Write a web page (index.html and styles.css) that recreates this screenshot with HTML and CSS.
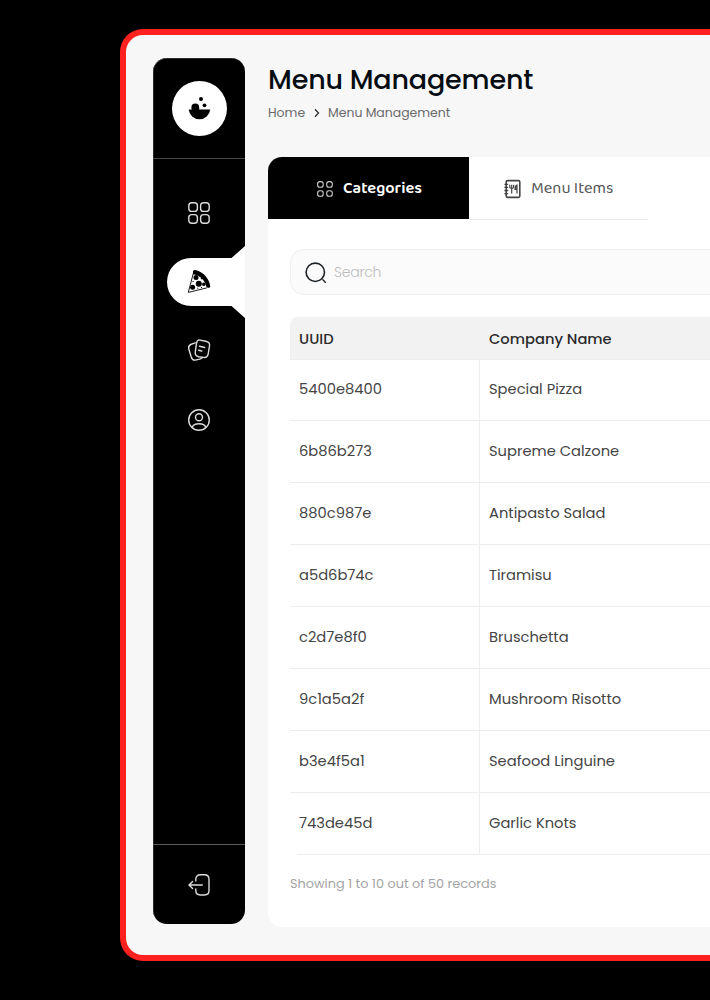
FILE: index.html
```html
<!DOCTYPE html>
<html lang="en">
<head>
<meta charset="utf-8">
<title>Menu Management</title>
<link rel="stylesheet" href="styles.css">
</head>
<body>
<div class="frame">
  <aside class="sidebar">
    <div class="brand">
      <svg class="logo" viewBox="0 0 55 55"><circle cx="27.5" cy="27.5" r="27.5" fill="#fff"/><path d="M16.700 28.500H19.800a4 4 0 0 1-.4-2 3.900 3.900 0 0 1 7.800 0v2h11a10.800 10.800 0 0 1-21.500 0z"/><circle cx="29" cy="18" r="2"/><circle cx="32.500" cy="24.300" r="1.900"/></svg>
    </div>
    <nav class="nav">
      <a class="nav-item"><svg class="ico" viewBox="0 0 24 24"><rect x="1.800" y="1.800" width="8.600" height="8.600" rx="3"/><rect x="13.600" y="1.800" width="8.600" height="8.600" rx="3"/><rect x="1.800" y="13.600" width="8.600" height="8.600" rx="3"/><rect x="13.600" y="13.600" width="8.600" height="8.600" rx="3"/></svg></a>
      <a class="nav-item active">
        <svg class="pill" viewBox="0 0 78 72"><path fill="#fff" d="M24 12H64.500L78 0V72L64.500 60H24a24 24 0 0 1 0-48z"/></svg>
        <svg class="pizza" viewBox="0 0 24 24"><path d="M6.300 4.300L1.300 23.400L19.800 18.900" fill="#fff" stroke="#000" stroke-width=".9"/><path d="M6 2.200C7 .9 8 1 9.200 1.300C16.500 3.300 22 9.500 23.200 16.700C23.500 18.200 22.500 19.200 21 18.700L19.500 18.200C18.300 11.500 13 6.200 6 5.200z"/><circle cx="9" cy="8.600" r="2.500"/><circle cx="11.800" cy="14.700" r="3"/><circle cx="5.600" cy="18.200" r="2.500"/><circle cx="16.800" cy="15.300" r="1.800"/><path d="M14 9l1.200 1.200M10.500 19.500l.8-.6M5.800 12l.5 1M14 18.800l1-.5" stroke="#000" stroke-width="1.100"/></svg>
      </a>
      <a class="nav-item"><svg class="ico cards" viewBox="0 0 24 24"><path d="M11.800 1.900l6.900 1.300c2.900.5 4.300 2.100 3.800 4.900l-1.300 7.800c-.5 2.800-2.100 4-4.900 3.500l-4.500-.7c-2.800-.5-4-2.100-3.500-4.900l1.200-8.400c.3-2.100 1-3.300 2.300-3.500z"/><path d="M8.200 4.800L4.800 6C2 6.900 1.100 8.500 1.900 11.200l2.200 7.500c.8 2.800 2.500 3.900 5.200 3.200l3.400-.8c1.300-.3 2.200-.8 2.700-1.500"/><path d="M12.600 8.300l5 1.200M11.600 12.200l3.200.8"/></svg></a>
      <a class="nav-item"><svg class="ico" viewBox="0 0 24 24"><circle cx="12" cy="12" r="10.300"/><circle cx="12" cy="9.300" r="3.500"/><path d="M5.200 19.500c.8-2.500 3.500-3.700 6.800-3.700s6 1.200 6.800 3.700"/></svg></a>
    </nav>
    <div class="logout"><svg class="ico" viewBox="0 0 24 24"><path d="M8.800 7.900V6.300C8.800 3.500 10.500 1.800 13.300 1.800H17.500C20.300 1.800 22 3.500 22 6.300V17.500C22 20.300 20.300 22 17.500 22H13.300C10.500 22 8.800 20.300 8.800 17.500V16"/><path d="M15.300 12H2.200M5.600 8.400L2 12l3.600 3.600"/></svg></div>
  </aside>

  <main class="main">
    <h1 class="title">Menu Management</h1>
    <div class="crumbs"><span class="crumb-home">Home</span><svg class="chev" viewBox="0 0 6 10"><path d="M1 1.200L4.500 5 1 8.800" fill="none" stroke="#333" stroke-width="1.300"/></svg><span>Menu Management</span></div>

    <section class="card">
      <div class="tabs">
        <div class="tab tab-on"><svg class="tab-ico" viewBox="0 0 18 18"><g fill="none" stroke="#ccc" stroke-width="1.100"><rect x="1.600" y="1.600" width="5.600" height="5.600" rx="2.300"/><rect x="10.700" y="1.600" width="5.600" height="5.600" rx="2.300"/><rect x="1.600" y="10.700" width="5.600" height="5.600" rx="2.300"/><rect x="10.700" y="10.700" width="5.600" height="5.600" rx="2.300"/></g></svg><span>Categories</span></div>
        <div class="tab tab-off"><svg class="book" viewBox="0 0 18 20"><g fill="none" stroke="#444"><rect x="2.200" y="1.600" width="13.600" height="16.800" rx="1.300" stroke-width="1.600"/><path d="M.4 5.300h3.800M.4 8.400h3.800M.4 11.500h3.800M.4 14.600h3.800" stroke-width="1.300"/><path d="M5.800 5.700v2.600c0 1.500 3.800 1.500 3.800 0V5.700M7.700 5.700v8.800" stroke-width="1.200"/><path d="M13 14.500V6c-1.500.4-2 2-2 4.300h2" stroke-width="1.200" fill="#777"/></g></svg><span>Menu Items</span></div>
      </div>

      <div class="content">
        <div class="search"><svg class="mag" viewBox="0 0 22 22"><circle cx="10.300" cy="10.300" r="9.200" fill="none" stroke="#1c2126" stroke-width="1.600"/><path d="M17.900 17.800l2.400 2.500" stroke="#1c2126" stroke-width="1.400" stroke-linecap="round"/></svg><span>Search</span></div>

        <div class="table">
          <div class="row head"><div class="cell">UUID</div><div class="cell">Company Name</div></div>
          <div class="row"><div class="cell">5400e8400</div><div class="cell">Special Pizza</div></div>
          <div class="row"><div class="cell">6b86b273</div><div class="cell">Supreme Calzone</div></div>
          <div class="row"><div class="cell">880c987e</div><div class="cell">Antipasto Salad</div></div>
          <div class="row"><div class="cell">a5d6b74c</div><div class="cell">Tiramisu</div></div>
          <div class="row"><div class="cell">c2d7e8f0</div><div class="cell">Bruschetta</div></div>
          <div class="row"><div class="cell">9c1a5a2f</div><div class="cell">Mushroom Risotto</div></div>
          <div class="row"><div class="cell">b3e4f5a1</div><div class="cell">Seafood Linguine</div></div>
          <div class="row last"><div class="cell">743de45d</div><div class="cell">Garlic Knots</div></div>
        </div>
        <div class="summary">Showing 1 to 10 out of 50 records</div>
      </div>
    </section>
  </main>
</div>
</body>
</html>
```
FILE: styles.css
```css
* { box-sizing: border-box; }
body {
  margin: 0;
  height: 1000px;
  padding: 29px 0 0 120px;
  background: #000;
  overflow: hidden;
  font-family: Poppins, Inter, sans-serif;
  font-size: 14.700px;
  color: #444;
}
svg { display: block; flex: none; }
.frame {
  display: flex;
  gap: 23px;
  width: 590px;
  height: 932px;
  padding: 23px 0 0 27px;
  border: 6px solid #ff2020;
  border-right: 0;
  border-radius: 23px 0 0 23px;
  background: #f7f7f7;
}
.sidebar {
  flex: none;
  display: flex;
  flex-direction: column;
  width: 92px;
  height: 866px;
  border-radius: 14px;
  background: #000;
  box-shadow: inset .5px .5px 0 #555;
}
.brand {
  height: 101px;
  padding: 23px 0 0 18.500px;
  border-bottom: 1px solid #4a4a4a;
}
.logo { width: 55px; height: 55px; }
.nav { flex: 1; padding-top: 19px; }
.nav-item {
  position: relative;
  display: flex;
  align-items: center;
  justify-content: center;
  height: 69px;
}
.ico {
  width: 24px;
  height: 24px;
  fill: none;
  stroke: #dcdcdc;
  stroke-width: 1.400;
  stroke-linecap: round;
  stroke-linejoin: round;
}
.cards { margin-bottom: 2px; }
.pill { position: absolute; left: 14px; top: -1.300px; width: 78px; height: 72px; }
.pizza { position: relative; width: 24px; height: 24px; margin-bottom: 1px; }
.logout {
  display: flex;
  align-items: center;
  justify-content: center;
  height: 80px;
  border-top: 1px solid #5a5a5a;
}
.main { flex: 1; min-width: 0; }
.title {
  margin: 0;
  height: 43px;
  line-height: 43px;
  font-size: 27px;
  font-weight: 500;
  letter-spacing: -.17px;
  color: #050c12;
}
.crumbs {
  display: flex;
  align-items: center;
  height: 22px;
  padding-top: 1px;
  font-size: 12.450px;
  color: #6a6a6a;
}
.crumb-home { width: 46px; }
.chev { width: 6px; height: 10px; margin-right: 8px; }
.card {
  height: 770px;
  margin-top: 34px;
  border-radius: 14px 0 0 14px;
  background: #fff;
  overflow: hidden;
}
.tabs {
  display: flex;
  height: 62px;
  font-family: "Baloo 2", "Noto Sans", sans-serif;
  font-size: 16.500px;
}
.tab { display: flex; align-items: center; padding-top: 1px; }
.tab-on {
  width: 201px;
  padding-left: 48px;
  background: #000;
  color: #fff;
  font-weight: 600;
}
.tab-ico { width: 18px; height: 18px; margin-right: 9px; }
.tab-off {
  width: 179px;
  height: 63px;
  padding-left: 35px;
  border-bottom: 1px solid #e8e8e8;
  color: #555;
}
.book { width: 18px; height: 20px; margin-right: 9px; }
.content { padding: 30px 0 0 22px; }
.search {
  display: flex;
  align-items: center;
  gap: 7px;
  height: 46px;
  padding: 1px 0 0 14px;
  border: 1px solid #efefef;
  border-right: 0;
  border-radius: 14px 0 0 14px;
  background: #fbfbfb;
  font-size: 14px;
  font-weight: 300;
  letter-spacing: -.25px;
  color: #bbb;
}
.mag { width: 22px; height: 22px; }
.table { margin-top: 22px; }
.row {
  position: relative;
  display: grid;
  grid-template-columns: 190px 1fr;
  height: 62px;
  border-bottom: 1px solid #ededed;
}
.cell { display: flex; align-items: center; padding: 0 0 1px 9px; white-space: nowrap; }
.cell:first-child { border-right: 1px solid #ededed; }
.head {
  height: 43px;
  border-radius: 8px 0 0 0;
  background: #f2f2f2;
  font-weight: 500;
  color: #2a2a2a;
}
.head .cell { padding-top: 2px; padding-bottom: 0; }
.head .cell:first-child { border-right: 0; }
.head + .row { height: 61px; }
.last { border-bottom: 0; background: linear-gradient(#ededed, #ededed) 7px 100% / 100% 1px no-repeat; }
.summary {
  margin-top: 18px;
  height: 22px;
  line-height: 22px;
  font-size: 12.850px;
  color: #a3a3a3;
}
```
